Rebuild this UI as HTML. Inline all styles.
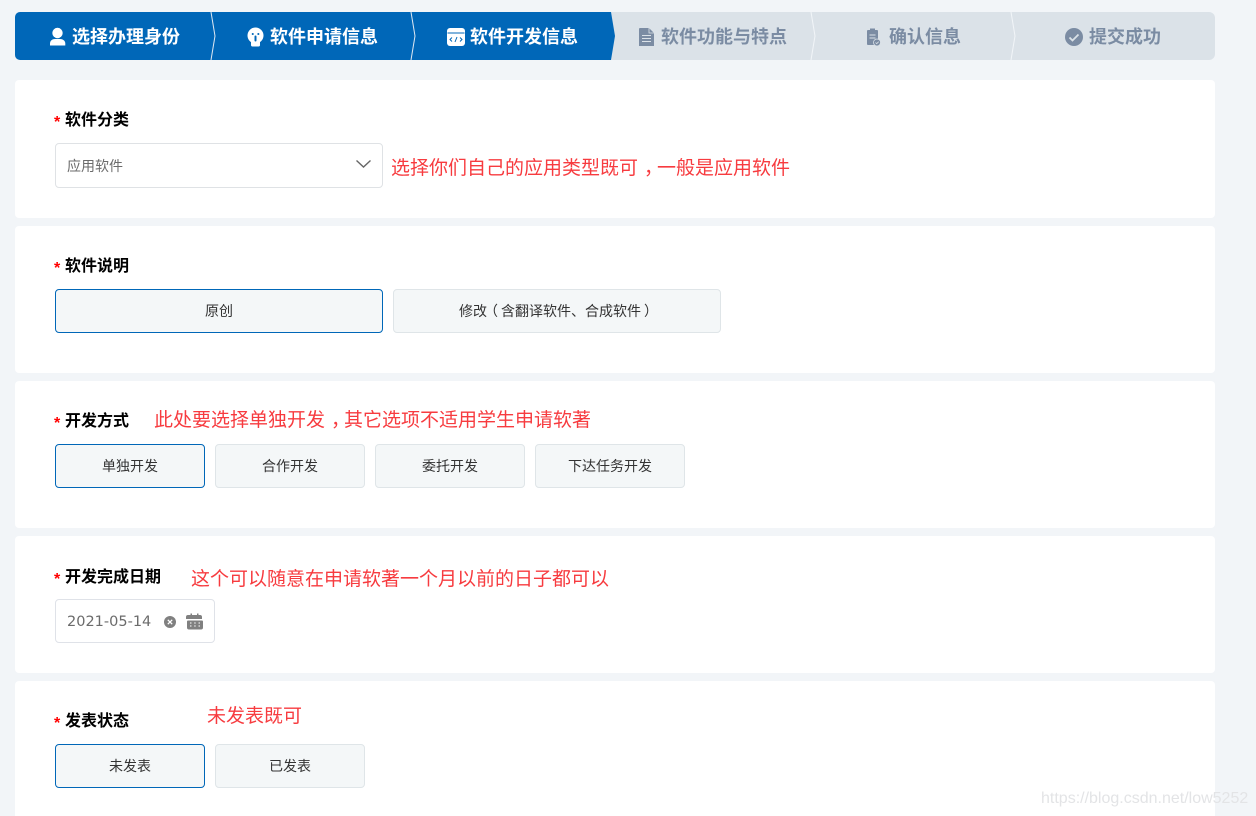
<!DOCTYPE html>
<html lang="zh-CN">
<head>
<meta charset="utf-8">
<style>
html,body{margin:0;padding:0;width:1256px;height:816px;overflow:hidden;background:#f2f5f8;font-family:"Liberation Sans","Noto Sans CJK SC",sans-serif;}
.a{position:absolute;white-space:nowrap;}
.card{position:absolute;left:15px;width:1200px;background:#fff;border-radius:4px;}
.lb{position:absolute;left:65px;font-size:16px;font-weight:700;color:#000;line-height:24px;white-space:nowrap;}
.st{position:absolute;left:54px;font-size:16px;color:#f00;line-height:24px;font-weight:700;}
.an{position:absolute;font-size:19px;color:#f73b3f;line-height:28px;white-space:nowrap;}
.btn{position:absolute;box-sizing:border-box;height:44px;background:#f4f7f8;border:1px solid #dfe5e8;border-radius:4px;font-size:14px;color:#333;text-align:center;line-height:43px;white-space:nowrap;}
.btn.on{border-color:#0067b8;}
.step{position:absolute;top:13px;height:48px;line-height:48px;font-size:18px;font-weight:700;white-space:nowrap;}
.w{color:#fff}.g{color:#7b8ca3}
.p{position:relative;}
svg{position:absolute;}
</style>
</head>
<body>
<svg style="left:0;top:0" width="1256" height="70" viewBox="0 0 1256 70">
<path d="M20 12H1209a6 6 0 0 1 6 6V54a6 6 0 0 1-6 6H20a5 5 0 0 1-5-5V17a5 5 0 0 1 5-5Z" fill="#dbe2e8"/>
<path d="M20 12H611L615 36L611 60H20a5 5 0 0 1-5-5V17a5 5 0 0 1 5-5Z" fill="#0067b8"/>
<path d="M211 12L215 36L211 60M411 12L415 36L411 60" fill="none" stroke="#dfe8f2" stroke-width="1"/>
<path d="M811 12L815 36L811 60M1011 12L1015 36L1011 60" fill="none" stroke="#f2f5f8" stroke-width="1"/>
<!-- user -->
<circle cx="57.500" cy="33" r="5.200" fill="#fff"/>
<path d="M50 45.500v-2c0-3 2.500-4.500 5-4.500h5c2.500 0 5.300 1.500 5.300 4.500v2Z" fill="#fff"/>
<!-- bulb -->
<circle cx="255.500" cy="35.500" r="8" fill="#fff"/>
<path d="M251 40h9v5a1.500 1.500 0 0 1-1.500 1.500h-6A1.500 1.500 0 0 1 251 45Z" fill="#fff"/>
<path d="M252.700 34h.1M258.300 34h.1M255.500 36.500v4" stroke="#0067b8" stroke-width="2" stroke-linecap="round"/>
<!-- code window -->
<rect x="447" y="28" width="18" height="18" rx="3" fill="#fff"/>
<path d="M447.500 33h17" stroke="#0067b8" stroke-width="1"/>
<path d="M452 37.500l-2 2 2 2M460 37.500l2 2-2 2M457 37l-2 5" stroke="#0067b8" stroke-width="1" fill="none"/>
<!-- doc -->
<path d="M640 28h9l5 5v13h-15V29a1 1 0 0 1 1-1Z" fill="#7b8ca3"/>
<path d="M649 28v5h5" fill="none" stroke="#dbe2e8" stroke-width=".8"/>
<path d="M642 35.500h9M642 38.500h9M642 41.500h9" stroke="#dbe2e8" stroke-width="1"/>
<!-- clipboard -->
<path d="M868 30h2v-1.500h5V30h2a1 1 0 0 1 1 1v14h-10a1 1 0 0 1-1-1V31a1 1 0 0 1 1-1Z" fill="#7b8ca3"/>
<path d="M869.500 35h6M869.500 38h6" stroke="#dbe2e8" stroke-width="1"/>
<circle cx="877" cy="42.500" r="3.500" fill="#7b8ca3" stroke="#dbe2e8" stroke-width=".8"/>
<path d="M875.500 42.500l1.200 1.200 2-2" stroke="#dbe2e8" stroke-width=".8" fill="none"/>
<!-- check -->
<circle cx="1074" cy="37" r="9" fill="#7b8ca3"/>
<path d="M1069.500 37.500l3 3 6-6" stroke="#dbe2e8" stroke-width="1.800" fill="none"/>
</svg>
<div class="step w" style="left:72px">选择办理身份</div>
<div class="step w" style="left:270px">软件申请信息</div>
<div class="step w" style="left:470px">软件开发信息</div>
<div class="step g" style="left:661px">软件功能与特点</div>
<div class="step g" style="left:889px">确认信息</div>
<div class="step g" style="left:1089px">提交成功</div>

<div class="card" style="top:80px;height:138px"></div>
<div class="card" style="top:226px;height:147px"></div>
<div class="card" style="top:381px;height:147px"></div>
<div class="card" style="top:536px;height:137px"></div>
<div class="card" style="top:681px;height:135px;border-radius:4px 4px 0 0"></div>

<div class="st" style="top:111px">*</div><div class="lb" style="top:109px">软件分类</div>
<div class="a" style="left:55px;top:143px;width:328px;height:45px;box-sizing:border-box;border:1px solid #dfe2e5;border-radius:4px;background:#fff;font-size:14px;color:#6b6b6b;line-height:45px;padding-left:11px">应用软件</div>
<svg style="left:355px;top:158px" width="18" height="12" viewBox="0 0 18 12"><path d="M1.500 2.500L8.500 9L15.500 2.500" fill="none" stroke="#666" stroke-width="1.400"/></svg>
<div class="an" style="left:391px;top:155px">选择你们自己的应用类型既可<span class="p" style="left:6px">，</span>一般是应用软件</div>

<div class="st" style="top:257px">*</div><div class="lb" style="top:255px">软件说明</div>
<div class="btn on" style="left:55px;top:289px;width:328px">原创</div>
<div class="btn" style="left:393px;top:289px;width:328px">修改<span class="p" style="left:-3px">（</span>含翻译软件、合成软件<span class="p" style="left:3px">）</span></div>

<div class="st" style="top:412px">*</div><div class="lb" style="top:410px">开发方式</div>
<div class="an" style="left:154px;top:407px">此处要选择单独开发<span class="p" style="left:6px">，</span>其它选项不适用学生申请软著</div>
<div class="btn on" style="left:55px;top:444px;width:150px">单独开发</div>
<div class="btn" style="left:215px;top:444px;width:150px">合作开发</div>
<div class="btn" style="left:375px;top:444px;width:150px">委托开发</div>
<div class="btn" style="left:535px;top:444px;width:150px">下达任务开发</div>

<div class="st" style="top:568px">*</div><div class="lb" style="top:566px">开发完成日期</div>
<div class="an" style="left:191px;top:566px">这个可以随意在申请软著一个月以前的日子都可以</div>
<div class="a" style="left:55px;top:599px;width:160px;height:44px;box-sizing:border-box;border:1px solid #dfe2e8;border-radius:4px;background:#fff;font-family:'DejaVu Sans',sans-serif;font-size:14.500px;color:#6b6b6b;line-height:44px;padding-left:11px">2021-05-14</div>
<svg style="left:160px;top:610px" width="46" height="24" viewBox="0 0 46 24">
<circle cx="10" cy="12" r="6" fill="#808080"/>
<path d="M7.800 9.800l4.400 4.400M12.200 9.800l-4.400 4.400" stroke="#fff" stroke-width="1.300"/>
<path d="M29 5h1.500v-1.500h1.500V5h5V3.500h1.500V5h1.500a2 2 0 0 1 2 2v2h-16V7a2 2 0 0 1 2-2Z" fill="#808080"/>
<path d="M28 10.500h14a1 1 0 0 1 1 1V17.500a2 2 0 0 1-2 2h-12a2 2 0 0 1-2-2V11.500a1 1 0 0 1 1-1Z" fill="#808080"/>
<path d="M30 13h1.500M34.200 13h1.500M38.500 13h1.500M30 16h1.500M34.200 16h1.500M38.500 16h1.500" stroke="#fff" stroke-width="1.100"/>
</svg>

<div class="st" style="top:712px">*</div><div class="lb" style="top:710px">发表状态</div>
<div class="an" style="left:207px;top:703px">未发表既可</div>
<div class="btn on" style="left:55px;top:744px;width:150px">未发表</div>
<div class="btn" style="left:215px;top:744px;width:150px">已发表</div>

<div class="a" style="left:1041px;top:788px;font-size:16px;line-height:22px;color:#e3e4e6">https://blog.csdn.net/low5252</div>
</body>
</html>
